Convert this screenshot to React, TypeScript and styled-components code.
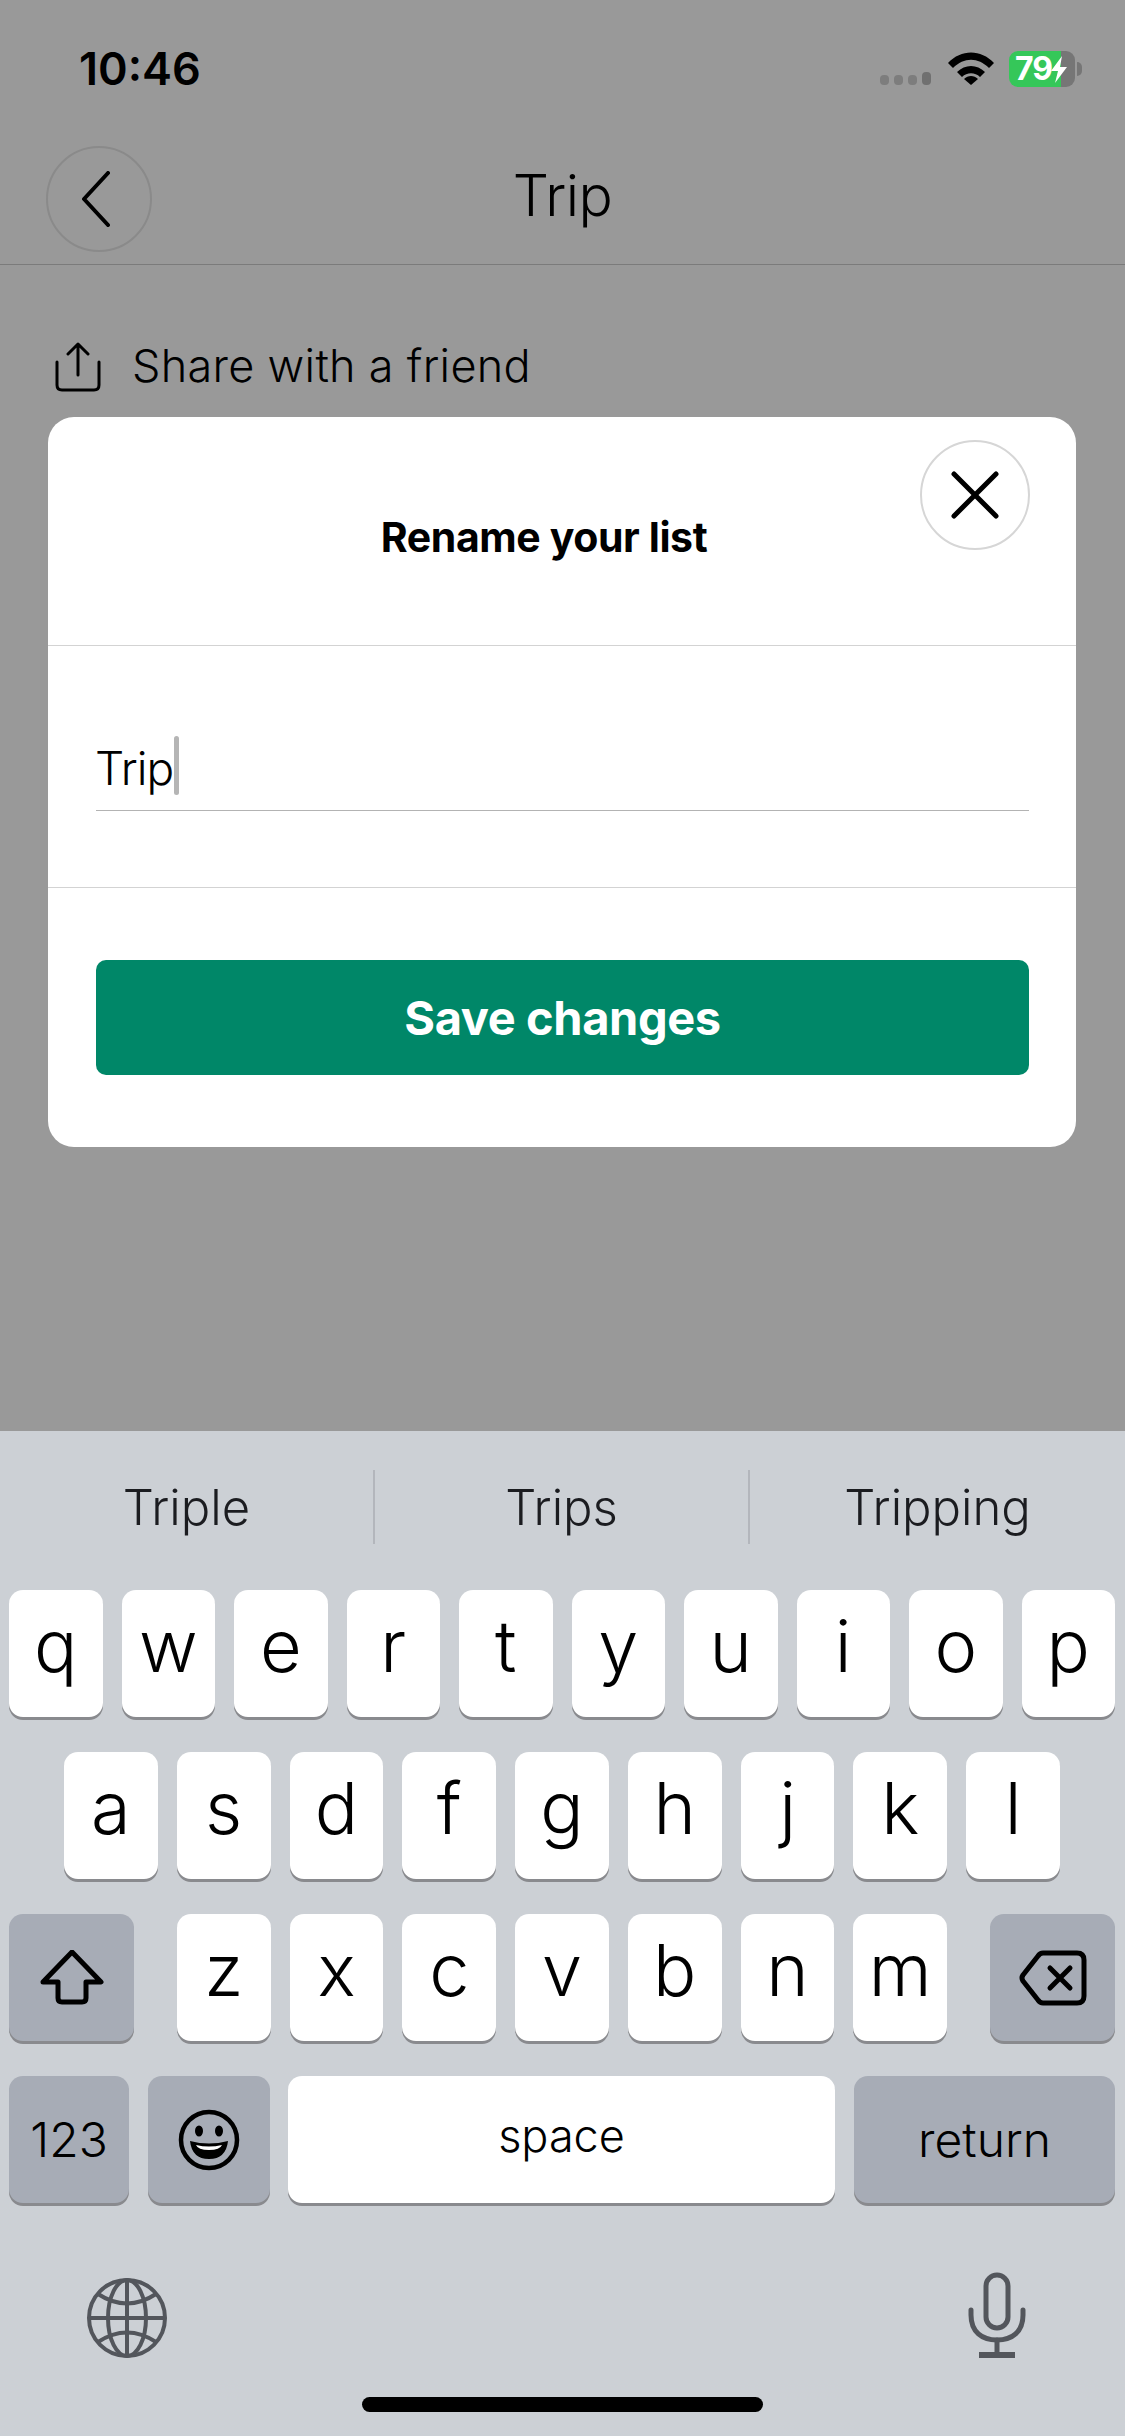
import styled, { createGlobalStyle } from "styled-components";

const GlobalStyle = createGlobalStyle`
  html, body {
    margin: 0;
    padding: 0;
    background: #999999;
  }
  * {
    box-sizing: border-box;
  }
`;

const Screen = styled.div`
  width: 1125px;
  height: 2436px;
  display: flex;
  flex-direction: column;
  overflow: hidden;
  position: relative;
  font-family: Inter, "Liberation Sans", sans-serif;
  color: #000;
`;

const Backdrop = styled.div`
  height: 1431px;
  background: #999999;
`;

const StatusBar = styled.div`
  height: 138px;
  padding: 46px 43px 0 79px;
  display: flex;
  align-items: flex-start;
  justify-content: space-between;
`;

const Clock = styled.span`
  font-size: 45px;
  line-height: 46px;
  font-weight: 600;
`;

const StatusIcons = styled.div`
  display: flex;
  align-items: flex-start;
  margin-top: 5px;
`;

const SignalDots = styled.svg`
  width: 52px;
  height: 14px;
  margin-top: 21px;
  margin-right: 15px;
`;

const WifiIcon = styled.svg`
  width: 48px;
  height: 34px;
  margin-right: 14px;
`;

const Battery = styled.div`
  width: 66px;
  height: 36px;
  border-radius: 9px;
  background: linear-gradient(to right, #35c759 0, #35c759 52px, #767676 52px);
  color: #fff;
  font-size: 32px;
  line-height: 36px;
  font-weight: 700;
  padding-left: 6px;
  letter-spacing: -1px;
  position: relative;
`;

const BatteryBolt = styled.svg`
  position: absolute;
  left: 41px;
  top: 5px;
  width: 18px;
  height: 27px;
`;

const BatteryNub = styled.div`
  width: 5px;
  height: 14px;
  margin: 11px 0 0 2px;
  border-radius: 0 5px 5px 0;
  background: #767676;
`;

const NavBar = styled.div`
  height: 127px;
  padding-top: 8px;
  display: grid;
  grid-template-columns: 1fr auto 1fr;
  align-items: start;
  border-bottom: 1px solid #7b7b7b;
`;

const BackButton = styled.div`
  width: 106px;
  height: 106px;
  margin-left: 46px;
  padding-right: 7px;
  border-radius: 50%;
  border: 2px solid #8a8a8a;
  display: flex;
  align-items: center;
  justify-content: center;
`;

const NavTitle = styled.div`
  font-size: 57px;
  line-height: 70px;
  font-weight: 350;
  letter-spacing: -0.6px;
  margin-top: 15px;
`;

const ShareRow = styled.div`
  padding: 77px 0 0 54px;
  display: flex;
  align-items: flex-start;
  gap: 30px;
`;

const ShareText = styled.span`
  font-size: 45px;
  line-height: 50px;
  font-weight: 350;
  letter-spacing: 0.3px;
  margin-top: -1px;
`;

const Modal = styled.div`
  position: absolute;
  left: 48px;
  top: 417px;
  width: 1028px;
  height: 730px;
  background: #fff;
  border-radius: 26px;
`;

const ModalHeader = styled.div`
  height: 229px;
  padding-top: 96px;
  text-align: center;
  border-bottom: 1px solid #d3d3d3;
`;

const ModalTitle = styled.div`
  font-size: 41px;
  line-height: 48px;
  font-weight: 700;
  letter-spacing: -0.4px;
  margin-left: -36px;
`;

const CloseButton = styled.div`
  position: absolute;
  right: 46px;
  top: 23px;
  width: 110px;
  height: 110px;
  border-radius: 50%;
  border: 2px solid #d6d6d6;
  display: flex;
  align-items: center;
  justify-content: center;
`;

const FieldSection = styled.div`
  height: 242px;
  padding: 90px 47px 0 48px;
  border-bottom: 1px solid #d3d3d3;
`;

const Field = styled.div`
  height: 75px;
  display: flex;
  align-items: flex-start;
  border-bottom: 1px solid #b3b3b3;
  font-size: 46px;
  line-height: 64px;
  font-weight: 350;
  letter-spacing: -1px;
  text-indent: -1px;
`;

const Caret = styled.span`
  width: 5px;
  height: 59px;
  border-radius: 3px;
  background: #b5b5b5;
  margin-left: 1px;
`;

const ButtonSection = styled.div`
  padding: 72px 47px 0 48px;
`;

const SaveButton = styled.div`
  height: 115px;
  border-radius: 10px;
  background: #008768;
  color: #fff;
  font-size: 47px;
  font-weight: 700;
  letter-spacing: -0.4px;
  display: flex;
  align-items: center;
  justify-content: center;
`;

const Keyboard = styled.div`
  flex: 1;
  background: #ccd0d5;
  padding-top: 39px;
  display: flex;
  flex-direction: column;
  position: relative;
`;

const Suggestions = styled.div`
  height: 74px;
  display: grid;
  grid-template-columns: 375px 375px 1fr;
  margin-bottom: 46px;
`;

const Suggestion = styled.div<{ $divider?: boolean }>`
  display: flex;
  align-items: center;
  justify-content: center;
  font-size: 49px;
  font-weight: 350;
  color: #1b1c20;
  border-right: ${(p) => (p.$divider ? "2px solid #b3b6bc" : "none")};
`;

const KeyRow = styled.div<{ $inset: number }>`
  height: 127px;
  display: flex;
  gap: 19px;
  padding: 0 ${(p) => p.$inset + 1}px 0 ${(p) => p.$inset}px;
  margin-bottom: 35px;
`;

const Key = styled.div<{ $width?: number; $dark?: boolean; $small?: boolean }>`
  ${(p) => (p.$width ? `width: ${p.$width}px; flex: none;` : "flex: 1;")}
  height: 127px;
  border-radius: 14px;
  background: ${(p) => (p.$dark ? "#a7acb6" : "#fff")};
  box-shadow: 0 3px 0 #898a8e;
  display: flex;
  align-items: center;
  justify-content: center;
  font-size: ${(p) => (p.$small ? "48px" : "72px")};
  font-weight: 300;
  padding-bottom: ${(p) => (p.$small ? "0" : "16px")};
  color: #000;
`;

const SpaceKey = styled(Key)`
  font-size: 45px;
  padding-bottom: 8px;
  margin-left: -1px;
`;

const KeyGap = styled.div<{ $width: number }>`
  width: ${(p) => p.$width}px;
  flex: none;
  margin-left: -19px;
`;

const KeyboardFooter = styled.div`
  padding: 0 99px 0 86px;
  margin-top: 34px;
  display: flex;
  justify-content: space-between;
  align-items: flex-start;
`;

const GlobeIcon = styled.svg`
  margin-top: 5px;
`;

const HomeBar = styled.div`
  position: absolute;
  left: 362px;
  bottom: 24px;
  width: 401px;
  height: 15px;
  border-radius: 8px;
  background: #000;
`;

const RowOne = "qwertyuiop".split("");
const RowTwo = "asdfghjkl".split("");
const RowThree = "zxcvbnm".split("");

export default function App() {
  return (
    <Screen>
      <GlobalStyle />
      <Backdrop>
        <StatusBar>
          <Clock>10:46</Clock>
          <StatusIcons>
            <SignalDots viewBox="0 0 52 14">
              <rect x="0" y="3" width="9" height="10" rx="4" fill="#7d7d7d" />
              <rect x="14" y="3" width="9" height="10" rx="4" fill="#7d7d7d" />
              <rect x="28" y="3" width="9" height="10" rx="4" fill="#7d7d7d" />
              <rect x="42" y="0" width="9" height="13" rx="4" fill="#707070" />
            </SignalDots>
            <WifiIcon viewBox="0 0 48 34">
              <path d="M1 12 C14 -2 34 -2 47 12 L42 17 C31 6 17 6 6 17 Z" fill="#000" />
              <path d="M10 21 C18 13 30 13 38 21 L33 26 C28 21 20 21 15 26 Z" fill="#000" />
              <path d="M17 28 C21 24 27 24 31 28 L24 34 Z" fill="#000" />
            </WifiIcon>
            <Battery>
              79
              <BatteryBolt viewBox="0 0 18 27">
                <path d="M12 0 L1 15 H8 L5 27 L17 11 H10 Z" fill="#fff" />
              </BatteryBolt>
            </Battery>
            <BatteryNub />
          </StatusIcons>
        </StatusBar>
        <NavBar>
          <BackButton>
            <svg width="30" height="56" viewBox="0 0 30 56" fill="none">
              <path d="M27 2 L3 28 L27 54" stroke="#000" strokeWidth="4" strokeLinecap="round" strokeLinejoin="round" />
            </svg>
          </BackButton>
          <NavTitle>Trip</NavTitle>
        </NavBar>
        <ShareRow>
          <svg width="48" height="50" viewBox="0 0 48 50" fill="none" stroke="#000" strokeWidth="3" strokeLinecap="round" strokeLinejoin="round">
            <path d="M24 33 V2 M14 12 L24 2 L34 12" />
            <path d="M3 20 V43 Q3 48 8 48 H40 Q45 48 45 43 V20" />
          </svg>
          <ShareText>Share with a friend</ShareText>
        </ShareRow>
        <Modal>
          <ModalHeader>
            <ModalTitle>Rename your list</ModalTitle>
          </ModalHeader>
          <CloseButton>
            <svg width="48" height="48" viewBox="0 0 48 48" fill="none">
              <path d="M3 3 L45 45 M45 3 L3 45" stroke="#000" strokeWidth="5" strokeLinecap="round" />
            </svg>
          </CloseButton>
          <FieldSection>
            <Field>
              Trip
              <Caret />
            </Field>
          </FieldSection>
          <ButtonSection>
            <SaveButton>Save changes</SaveButton>
          </ButtonSection>
        </Modal>
      </Backdrop>
      <Keyboard>
        <Suggestions>
          <Suggestion $divider>Triple</Suggestion>
          <Suggestion $divider>Trips</Suggestion>
          <Suggestion>Tripping</Suggestion>
        </Suggestions>
        <KeyRow $inset={9}>
          {RowOne.map((k) => (
            <Key key={k}>{k}</Key>
          ))}
        </KeyRow>
        <KeyRow $inset={64}>
          {RowTwo.map((k) => (
            <Key key={k}>{k}</Key>
          ))}
        </KeyRow>
        <KeyRow $inset={9}>
          <Key $dark $small $width={125}>
            <svg width="64" height="56" viewBox="0 0 64 56" fill="none">
              <path
                d="M32 3 L61 33 H46 V49 Q46 53 42 53 H22 Q18 53 18 49 V33 H3 Z"
                stroke="#000"
                strokeWidth="5"
                strokeLinejoin="round"
                transform="translate(0 -1)"
              />
            </svg>
          </Key>
          <KeyGap $width={24} />
          {RowThree.map((k) => (
            <Key key={k}>{k}</Key>
          ))}
          <KeyGap $width={24} />
          <Key $dark $small $width={125}>
            <svg width="68" height="56" viewBox="0 0 68 56" fill="none" stroke="#000" strokeWidth="5" strokeLinejoin="round" strokeLinecap="round">
              <path d="M24 3 H58 Q65 3 65 10 V46 Q65 53 58 53 H24 Q21 53 19 50 L4 31 Q2 28 4 25 L19 6 Q21 3 24 3 Z" />
              <path d="M31 18 L51 38 M51 18 L31 38" />
            </svg>
          </Key>
        </KeyRow>
        <KeyRow $inset={9}>
          <Key $dark $small $width={120}>123</Key>
          <Key $dark $small $width={122}>
            <svg width="62" height="62" viewBox="0 0 62 62" fill="none">
              <circle cx="31" cy="31" r="28" stroke="#000" strokeWidth="4.5" />
              <ellipse cx="21" cy="22" rx="4" ry="5.5" fill="#000" />
              <ellipse cx="41" cy="22" rx="4" ry="5.5" fill="#000" />
              <path d="M12 32 Q31 37 50 32 Q48 50 31 50 Q14 50 12 32 Z" fill="#000" />
              <path d="M18 36 Q31 39 44 36 Q42 41 31 41 Q20 41 18 36 Z" fill="#fff" />
            </svg>
          </Key>
          <SpaceKey $small>space</SpaceKey>
          <Key $dark $small $width={261}>return</Key>
        </KeyRow>
        <KeyboardFooter>
          <GlobeIcon width="82" height="82" viewBox="0 0 82 82" fill="none" stroke="#53565c" strokeWidth="4">
            <circle cx="41" cy="41" r="38" />
            <ellipse cx="41" cy="41" rx="19" ry="38" />
            <path d="M41 3 V79 M3 41 H79" />
            <path d="M12 17 Q41 36 70 17 M12 65 Q41 46 70 65" />
          </GlobeIcon>
          <svg width="58" height="86" viewBox="0 0 58 86" fill="none" stroke="#53565c" strokeWidth="5" strokeLinecap="round">
            <rect x="18" y="3" width="22" height="53" rx="11" />
            <path d="M3 38 V43 C3 60 14 68 29 68 C44 68 55 60 55 43 V38" />
            <path d="M29 68 V82" />
            <path d="M11 83 H47" strokeWidth="6" strokeLinecap="butt" />
          </svg>
        </KeyboardFooter>
        <HomeBar />
      </Keyboard>
    </Screen>
  );
}
